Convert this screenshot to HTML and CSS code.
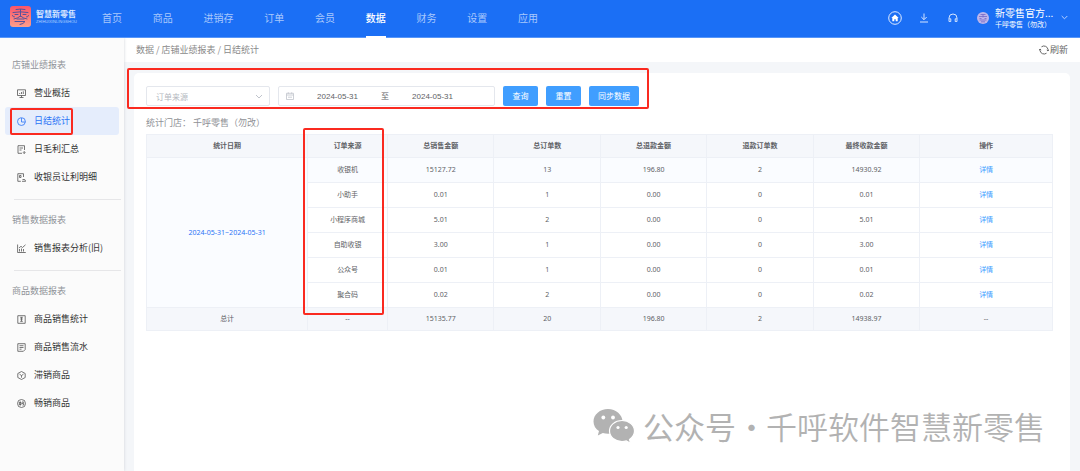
FILE: index.html
```html
<!DOCTYPE html>
<html lang="zh-CN">
<head>
<meta charset="utf-8">
<title>日结统计</title>
<meta name="viewport" content="width=device-width, initial-scale=1">
<link rel="stylesheet" href="styles.css">
</head>
<body>
<header class="topbar">
  <a class="brand" href="#">
    <svg class="brand-logo" viewBox="0 0 21 21" aria-hidden="true">
      <defs><linearGradient id="lg" x1="0" y1="0" x2="0" y2="1"><stop offset="0" stop-color="#fb5569"/><stop offset="1" stop-color="#ff9f8b"/></linearGradient></defs>
      <rect width="21" height="21" rx="3" fill="url(#lg)"/>
      <g fill="none" stroke="#56529c" stroke-width="1" stroke-linecap="round">
        <path d="M6 3.500q4.500-1 9 0M3 6.500q7.500-1.400 15 0M10.500 3.500v7M5 8.500h3M13 8.500h3M2.500 9.500q.5 2 2 1.500M18.500 9.500q-.5 2-2 1.500M4 13q3.500-.5 6.500-3q3 2.500 6.500 3M7 13h7M5 15.500h10q-1.500 2.500-5 3"/>
      </g>
    </svg>
    <span class="brand-text"><b>智慧新零售</b><small>ZHIHUIXINLINGSHOU</small></span>
  </a>
  <nav class="mainnav">
    <a href="#">首页</a><a href="#">商品</a><a href="#">进销存</a><a href="#">订单</a><a href="#">会员</a><a class="current" href="#">数据</a><a href="#">财务</a><a href="#">设置</a><a href="#">应用</a>
  </nav>
  <div class="tools">
    <button class="tool" aria-label="主页"><svg width="14" height="14" viewBox="0 0 14 14"><circle cx="7" cy="7" r="6.300" fill="none" stroke="#dfeaff"/><path d="M7 3.600 3.300 7h1v3.200h2V8.300h1.400v1.900h2V7h1z" fill="#fff"/></svg></button>
    <button class="tool" aria-label="下载"><svg width="10" height="10" viewBox="0 0 10 10" fill="none" stroke="#d4e4ff"><path d="M5 .5v6M2.300 4 5 6.700 7.700 4M1 9h8"/></svg></button>
    <button class="tool" aria-label="客服"><svg width="10" height="10" viewBox="0 0 10 10" fill="none" stroke="#d4e4ff"><path d="M1.500 8.500H1V5a4 4 0 0 1 8 0v3.500h-.5M1.200 5.800h1.600v2.700H1.200M8.800 5.800H7.200v2.700h1.600"/></svg></button>
    <button class="account">
      <svg width="12" height="12" viewBox="0 0 12 12"><circle cx="6" cy="6" r="6" fill="#bdb5ea"/><path d="M3.500 2.500h5M2 4.500h8M6 2.500v3M2.500 6.500h2M7.500 6.500h2M2.500 8h7M4 9.800h4" stroke="#7468c8" fill="none" stroke-width=".8"/></svg>
      <span class="account-text"><span class="account-name">新零售官方...</span><span class="account-sub">千呼零售（勿改）</span></span>
      <svg width="7" height="5" viewBox="0 0 7 5" fill="none" stroke="#b9d2ff"><path d="M.7 1 3.500 3.800 6.300 1"/></svg>
    </button>
  </div>
</header>

<div class="shell">
  <aside class="sidebar">
    <section class="group">
      <h2>店铺业绩报表</h2>
      <a class="item" href="#"><svg viewBox="0 0 9 9"><path d="M.5.8h8v5.700h-8zM2.500 8.500h4M4.500 6.500v2M2.700 5V4M4.500 5V3M6.300 5V2.300"/></svg>营业概括</a>
      <a class="item active" href="#"><svg viewBox="0 0 9 9"><path d="M4 .7A3.900 3.900 0 1 0 8.300 5H4.500V.7A3.900 3.900 0 0 1 8.400 4.500V5"/></svg>日结统计<i class="mark mark-item"></i></a>
      <a class="item" href="#"><svg viewBox="0 0 9 9"><path d="M7.500 5V.7H1v7.600h4M2.500 3h3.500M2.500 5h2M7.200 6v2.500M6 7.300l1.200 1.200 1.200-1.200"/></svg>日毛利汇总</a>
      <a class="item" href="#"><svg viewBox="0 0 9 9"><path d="M6.500 4V.7H.8v7.600h3M2.500 2.500h1.500v2H2.500zM5 8.300h3.700M5.500 6.500h2.200l1 1.800"/></svg>收银员让利明细</a>
    </section>
    <section class="group">
      <h2>销售数据报表</h2>
      <a class="item" href="#"><svg viewBox="0 0 9 9"><path d="M.6.5v8h8.200M2.500 7.500V5M4.500 7.500V4.500M6.500 7.500V5M2 4l2-1.700L5.500 3.500 8.500.8"/></svg>销售报表分析(旧)</a>
    </section>
    <section class="group">
      <h2>商品数据报表</h2>
      <a class="item" href="#"><svg viewBox="0 0 9 9"><path d="M.8.7h7.400v7.600H.8zM3.200 2.300h2.600M4.500 2.300v4M3.200 4h2.600M3.200 6.300h2.600"/></svg>商品销售统计</a>
      <a class="item" href="#"><svg viewBox="0 0 9 9"><path d="M.8.7h7.400v5.800L6.400 8.300H.8zM2.500 2.700h4M2.500 4.500h4M2.500 6.200h2"/></svg>商品销售流水</a>
      <a class="item" href="#"><svg viewBox="0 0 9 9"><path d="M4.500.5 8.200 2.500v4L4.500 8.500.8 6.500v-4zM2.500 3.200l2 1.300 2-1.300M4.500 4.500v2.200"/></svg>滞销商品</a>
      <a class="item" href="#"><svg viewBox="0 0 9 9"><circle cx="4.500" cy="4.500" r="4"/><path d="M2.300 3.500h1.800v2H2.300zM3.200 2.300v4.400M5 3h1.700L5 4.700h2L6 6.700"/></svg>畅销商品</a>
    </section>
  </aside>

  <main class="main">
    <div class="crumbs">
      <span>数据 / 店铺业绩报表 / 日结统计</span>
      <button class="refresh"><svg width="10" height="10" viewBox="0 0 10 10" fill="none" stroke="#666"><path d="M2.500 1.800A4.100 4.100 0 0 1 9 4.500V6M9.800 4.700 9 6 7.800 5M7.500 8.200A4.100 4.100 0 0 1 1 5.500V4M.2 5.300 1 4l1.200 1"/></svg>刷新</button>
    </div>
    <div class="card">
      <form class="filters">
        <label class="select"><select aria-label="订单来源"><option>订单来源</option></select><svg width="8" height="5" viewBox="0 0 8 5" fill="none" stroke="#c0c4cc"><path d="M1 1l3 3 3-3"/></svg></label>
        <div class="range">
          <svg width="8" height="8" viewBox="0 0 8 8" fill="none" stroke="#c0c4cc" stroke-width=".8"><path d="M.5 1.300h7v6.200h-7zM.5 3h7M2.300.3v1.500M5.700.3v1.500M2 5.200h4"/></svg>
          <input type="text" value="2024-05-31" aria-label="开始日期"><span>至</span><input type="text" value="2024-05-31" aria-label="结束日期">
        </div>
        <button class="btn" type="button">查询</button>
        <button class="btn" type="button">重置</button>
        <button class="btn" type="button">同步数据</button>
        <i class="mark mark-filters"></i>
      </form>
      <p class="store">统计门店： 千呼零售（勿改）</p>
      <div class="report">
        <table>
          <colgroup><col class="c-date"><col class="c-source"><col class="c-num"><col class="c-num"><col class="c-num"><col class="c-num"><col class="c-num"><col></colgroup>
          <thead><tr><th>统计日期</th><th>订单来源</th><th>总销售金额</th><th>总订单数</th><th>总退款金额</th><th>退款订单数</th><th>最终收款金额</th><th>操作</th></tr></thead>
          <tbody>
            <tr class="hover"><td class="date" rowspan="6">2024-05-31~2024-05-31</td><td>收银机</td><td>15127.72</td><td>13</td><td>196.80</td><td>2</td><td>14930.92</td><td><a href="#">详情</a></td></tr>
            <tr><td>小助手</td><td>0.01</td><td>1</td><td>0.00</td><td>0</td><td>0.01</td><td><a href="#">详情</a></td></tr>
            <tr><td>小程序商城</td><td>5.01</td><td>2</td><td>0.00</td><td>0</td><td>5.01</td><td><a href="#">详情</a></td></tr>
            <tr><td>自助收银</td><td>3.00</td><td>1</td><td>0.00</td><td>0</td><td>3.00</td><td><a href="#">详情</a></td></tr>
            <tr><td>公众号</td><td>0.01</td><td>1</td><td>0.00</td><td>0</td><td>0.01</td><td><a href="#">详情</a></td></tr>
            <tr><td>聚合码</td><td>0.02</td><td>2</td><td>0.00</td><td>0</td><td>0.02</td><td><a href="#">详情</a></td></tr>
          </tbody>
          <tfoot><tr><td>总计</td><td>--</td><td>15135.77</td><td>20</td><td>196.80</td><td>2</td><td>14938.97</td><td>--</td></tr></tfoot>
        </table>
        <i class="mark mark-column"></i>
      </div>
    </div>
  </main>
</div>

<div class="watermark">
  <svg width="42" height="36" viewBox="0 0 42 36" aria-hidden="true">
    <path d="M15 1C7 1 .5 6.500.5 13.500c0 4 2 7.300 5.500 9.600L4.800 27.500l5-2.500c1.700.5 3.500.8 5.200.8C23 25.800 29.500 20 29.500 13.500S23 1 15 1z" fill="#b2b2b2"/>
    <path d="M29 12.500c-7 0-12.500 4.700-12.500 10.600S22 33.500 29 33.500c1.500 0 3-.2 4.300-.6l4.200 2.300-1-3.700c3-2 5-5 5-8.400 0-5.900-5.500-10.600-12.500-10.600z" fill="#b2b2b2" stroke="#fff" stroke-width="1.200"/>
    <g fill="#fff"><circle cx="10.300" cy="9.500" r="1.900"/><circle cx="20" cy="9.500" r="1.900"/><circle cx="25" cy="19.500" r="1.600"/><circle cx="33.200" cy="19.500" r="1.600"/></g>
  </svg>
  <b>公众号</b><span class="dot">·</span><span>千呼软件智慧新零售</span>
</div>
</body>
</html>
```

FILE: styles.css
```css
* { box-sizing: border-box; }
body {
  margin: 0;
  min-height: 100vh;
  display: flex;
  flex-direction: column;
  position: relative;
  background: #f4f6f9;
  color: #606266;
  font: 9px/14px "Noto Sans CJK SC", sans-serif;
}
a { color: inherit; text-decoration: none; }
button { border: 0; padding: 0; background: none; color: inherit; font: inherit; cursor: pointer; }
svg { flex: none; display: block; }

/* Top bar */
.topbar {
  position: relative;
  z-index: 2;
  display: flex;
  align-items: stretch;
  height: 38px;
  padding: 0 12px 0 10px;
  background: #1b6ff5;
  border-bottom: 1px solid #5796f9;
  color: #fff;
}
.brand { display: flex; align-items: center; gap: 5px; width: 92px; padding-bottom: 4px; }
.brand-logo { width: 21px; height: 21px; }
.brand-text { display: flex; flex-direction: column; color: #d9e7ff; }
.brand-text b { font-size: 8px; line-height: 10px; }
.brand-text small { font: 4px/5px "Liberation Sans", sans-serif; color: #b4cffd; }
.mainnav { display: flex; justify-content: space-between; width: 436px; font-size: 10px; line-height: 36px; color: #a9c8fc; }
.mainnav a { height: 38px; }
.mainnav .current { color: #fff; font-weight: 500; border-bottom: 2px solid #fff; }
.tools { display: flex; align-items: center; gap: 19px; margin-left: auto; padding-bottom: 2px; }
.tool:first-child { margin-right: -2px; }
.account { display: flex; align-items: center; gap: 6px; text-align: left; }
.account-text { display: flex; flex-direction: column; width: 60px; white-space: nowrap; }
.account-name { font-size: 10px; line-height: 12px; }
.account-sub { font-size: 7px; line-height: 10px; }

/* Sidebar */
.shell { flex: 1; display: flex; }
.sidebar {
  flex: none;
  width: 124px;
  padding-top: 17px;
  background: #fbfbfb;
  box-shadow: 0 0 3px #d0d3d8;
  z-index: 1;
}
.group + .group { margin-top: 8px; }
.group + .group::before {
  content: "";
  display: block;
  height: 1px;
  margin: 0 3px 10px 14px;
  background: #e6e6e8;
}
.group h2 { margin: 0 0 4px; padding-left: 12px; font-size: 9px; line-height: 20px; font-weight: 400; color: #909399; }
.item {
  position: relative;
  display: flex;
  align-items: center;
  gap: 8px;
  height: 28px;
  margin: 0 5px;
  padding-left: 12px;
  border-radius: 3px;
  color: #333;
  white-space: nowrap;
}
.item svg { width: 9px; height: 9px; fill: none; stroke: #555; stroke-width: .8; }
.item.active { background: #e5edfc; color: #2b74f6; }
.item.active svg { stroke: #2b74f6; }

/* Content */
.main { flex: 1; min-width: 0; display: flex; flex-direction: column; }
.crumbs {
  display: flex;
  justify-content: space-between;
  align-items: center;
  height: 24px;
  padding: 0 12px;
  background: #fff;
  color: #8a8a8a;
}
.refresh { display: flex; align-items: center; gap: 1px; color: #666; }
.card { flex: 1; margin: 11px 10px 0; padding: 13px 17px 12px 12px; background: #fff; border-radius: 5px 5px 0 0; }
.filters { position: relative; display: flex; align-items: center; gap: 8px; height: 20px; }
.select { position: relative; display: flex; }
.select select {
  width: 124px;
  height: 20px;
  padding: 0 9px;
  border: 1px solid #e4e7ed;
  border-radius: 2px;
  background: #fff;
  appearance: none;
  color: #b4b8c0;
  font: 8px "Noto Sans CJK SC", sans-serif;
}
.select svg { position: absolute; right: 7px; top: 8px; pointer-events: none; }
.range {
  display: flex;
  align-items: center;
  width: 217px;
  height: 20px;
  padding: 0 18px 0 7px;
  border: 1px solid #e4e7ed;
  border-radius: 2px;
  font-size: 8px;
}
.range input {
  flex: 1;
  min-width: 0;
  border: 0;
  padding: 0;
  background: none;
  color: #606266;
  text-align: center;
  font: 8px "Liberation Sans", sans-serif;
}
.btn { height: 20px; min-width: 35px; padding: 0 9px; border-radius: 2px; background: #409eff; color: #fff; font-size: 8px; line-height: 20px; }
.store { margin: 10px 0 4px; color: #8f9196; }

/* Report table */
.report { position: relative; }
table { width: 100%; border-collapse: collapse; table-layout: fixed; font: 7px/12px "Noto Sans", "Noto Sans CJK SC", sans-serif; text-align: center; }
.c-date { width: 17.8%; }
.c-source { width: 8.8%; }
.c-num { width: 11.75%; }
th, td { height: 25px; padding: 0; border: 1px solid #edf0f6; }
th { height: 23px; background: #f5f7fb; font-weight: 700; }
.hover td, td.date { background: #fafcff; }
td.date { color: #2b74f6; }
td a { color: #409eff; }
tfoot td { height: 23px; background: #f5f7fb; }

/* Red callout frames */
.mark { position: absolute; border: 2px solid #fa2a20; border-radius: 2px; pointer-events: none; z-index: 2; }
.mark-item { left: 5px; top: 1px; width: 63px; height: 27px; }
.mark-filters { left: -19px; top: -18px; width: 522px; height: 41px; }
.mark-column { left: 157px; top: -6px; width: 81px; height: 187px; }

.watermark {
  position: absolute;
  right: 35px;
  bottom: 22px;
  display: flex;
  align-items: center;
  color: #b2b2b2;
  font-size: 31px;
  line-height: 46px;
  font-weight: 350;
  white-space: nowrap;
}
.watermark svg { margin-right: 8px; }
.watermark b { font-weight: 400; }
.watermark .dot { width: 30px; text-align: center; }
```
